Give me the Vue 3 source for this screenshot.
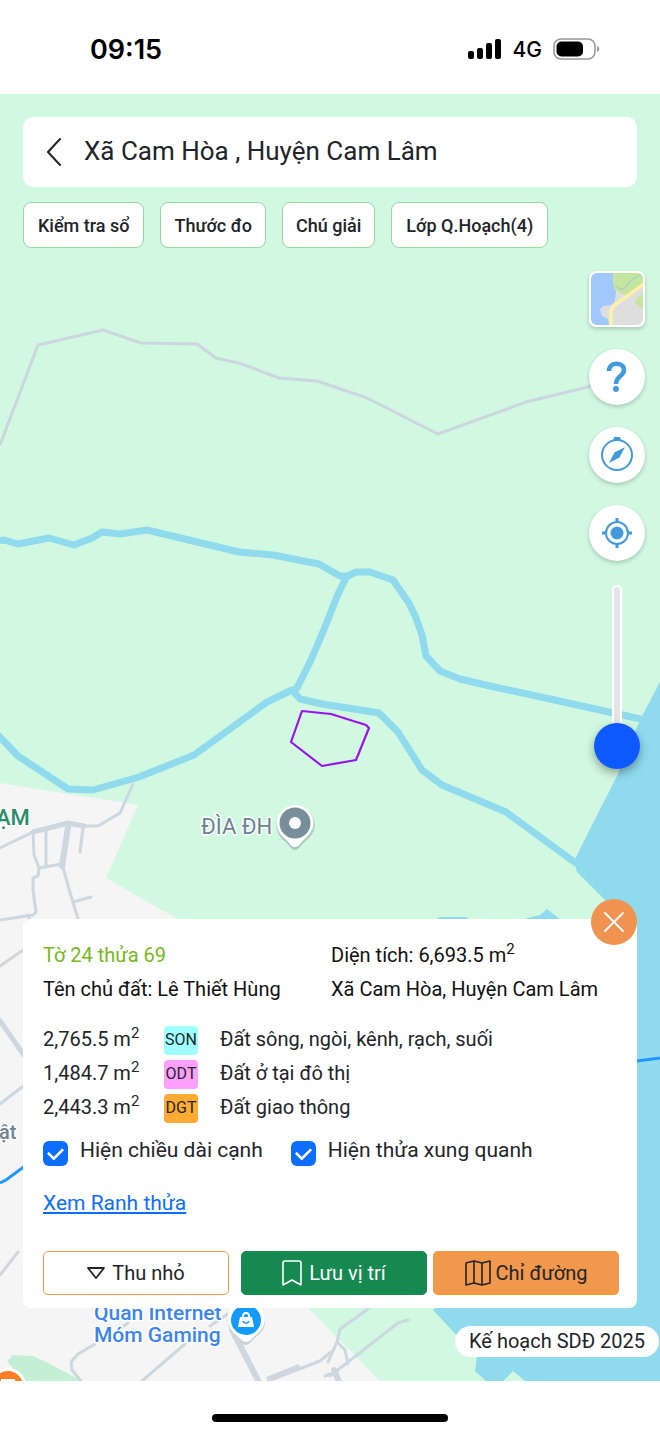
<script setup>
import { ref } from 'vue'

const layers = ['Kiểm tra sổ', 'Thước đo', 'Chú giải', 'Lớp Q.Hoạch(4)']
const landUses = [
  { area: '2,765.5', code: 'SON', tone: 'son', name: 'Đất sông, ngòi, kênh, rạch, suối' },
  { area: '1,484.7', code: 'ODT', tone: 'odt', name: 'Đất ở tại đô thị' },
  { area: '2,443.3', code: 'DGT', tone: 'dgt', name: 'Đất giao thông' }
]
const opacity = ref(0)
const showEdges = ref(true)
const showNeighbours = ref(true)
</script>

<template>
  <div class="screen">
    <header class="status">
      <span class="clock">09:15</span>
      <div class="signals">
        <svg width="34" height="22" viewBox="0 0 34 22" aria-hidden="true">
          <rect x="0" y="13" width="6" height="8" rx="2" />
          <rect x="9" y="10" width="6" height="11" rx="2" />
          <rect x="18" y="5" width="6" height="16" rx="2" />
          <rect x="27" y="1" width="6" height="20" rx="2" />
        </svg>
        <span class="network">4G</span>
        <svg width="47" height="22" viewBox="0 0 47 22" aria-hidden="true">
          <rect x="1" y="1" width="41" height="20" rx="7" fill="none" stroke="#999" stroke-width="1.6" />
          <rect x="3.500" y="3.500" width="26.500" height="15" rx="5" />
          <path d="M44 8c3 1 3 5 0 6z" fill="#999" />
        </svg>
      </div>
    </header>

    <main class="map">
      <svg class="canvas" viewBox="0 94 660 1287" preserveAspectRatio="xMidYMin slice" aria-hidden="true">
        <rect y="94" width="660" height="1287" fill="#d1f8e1" />
        <path fill="#f5f5f5" d="M0 783 138 805 106 878 160 909 180 920 308 1308 380 1381H0z" />
        <path fill="#c3f0d5" d="M7 1361 13 1355 33 1356 50 1364 82 1381H24z" />
        <path fill="#90daee" d="M660 682 641 718 637 727 617 776 592 825 574 861 577 872 606 901 625 930 460 1290 433 1310 477 1357 475 1371 486 1381H503L513 1371 525 1381H660z" />
        <path fill="#90daee" d="M433 921 440 917H466L471 921zM516 921 540 915 547 909 562 921z" />

        <g fill="none" stroke="#ccd7df" stroke-linejoin="round" stroke-linecap="round">
          <g stroke-width="3">
            <path d="M0 848 33 832M67 824 84 826H98L120 813 133 784" />
            <path d="M33 832 34 855 39 868 38 876 33 878V890L36 912 33 915 0 920M27 915 31 921" />
            <path d="M46 831V866M39 868 62 864M83 828 80 852M62 864 69 889 79 922M73 902 91 897" />
            <path d="M0 966 26 948M0 1104 26 1084M0 1275 18 1252" />
            <path d="M81 1381 72 1370 71 1362 78 1354 95 1344M128 1323 118 1330M142 1381 185 1344M210 1326 228 1314" />
            <path d="M268 1381 320 1361 331 1352M268 1378 298 1366M325 1376 330 1374" />
            <path d="M368 1309 340 1329 337 1342 328 1362M337 1342 345 1350 348 1364M330 1376 398 1323 408 1320" />
          </g>
          <path stroke-width="5" d="M33 832 68 823 84 826M0 1021 28 1061" />
          <path stroke-width="6" d="M68 827 62 866M232 1330 260 1384M334 1370 340 1384" />
        </g>
        <path fill="none" stroke="#ccd6df" stroke-width="3" stroke-linejoin="round" d="M0 445 38 345 103 330 141 343 197 344 216 358 242 364 279 378 317 381 367 398 438 434 526 402 600 384" />

        <g fill="none" stroke="#90daee" stroke-width="7" stroke-linejoin="round">
          <path d="M-4 541 4 540 18 544 49 538 74 545 92 538 102 532 120 534 147 530 239 552 273 555 319 564 340 576H348L356 572H370L393 580 409 603 416 618 422 635 426 656 440 671 460 679 490 686 550 699 645 720" />
          <path d="M347 576 338 594 325 627 311 660 297 688 292 691" />
          <path d="M-3 734 18 756 68 789 93 790 139 777 194 755 267 702 292 690 300 699 322 704 379 713 398 732 422 770 442 785 506 812 577 864" />
        </g>
        <path fill="none" stroke="#2196ff" stroke-width="3" d="M637 1061 660 1058M0 1183 6 1180 25 1166" />
        <path fill="none" stroke="#9a12ec" stroke-width="2.2" stroke-linejoin="round" d="M302 711 331 714 366 725 369 728 356 760 322 766 291 742z" />

        <g class="place">
          <text x="-4" y="825" font-size="22" fill="#2b8f66">ẠM</text>
          <text class="light" x="201" y="834" font-size="22" fill="#6c8391">ĐÌA ĐH</text>
          <text x="-1" y="1139" font-size="20" fill="#6c8391">ật</text>
          <g fill="#3d85ee" font-size="21">
            <text x="94" y="1320">Quán Internet</text>
            <text x="94" y="1342">Móm Gaming</text>
          </g>
        </g>
        <g>
          <path fill="#a9c9bd" d="M295 850c-4 0-6-6-12-10-14-14-3-34 12-34s29 19 12 34c-6 4-8 10-12 10z" />
          <path fill="#fff" d="M295 847c-4 0-6-5-11-9-15-13-4-33 11-33s27 19 11 33c-5 4-7 9-11 9z" />
          <circle cx="295" cy="823" r="15.500" fill="#788e9a" />
          <circle cx="295" cy="823" r="6" fill="#fff" />
        </g>
        <g>
          <path fill="#cbd1d4" d="M246 1345c-4 0-6-5-11-9-15-13-5-35 11-35s28 22 11 35c-5 4-7 9-11 9z" />
          <path fill="#fff" d="M246 1342c-4 0-6-4-11-8-15-13-5-34 11-34s27 21 11 34c-5 4-7 8-11 8z" />
          <circle cx="246" cy="1320" r="15" fill="#129bfb" />
          <path fill="#fff" d="M240 1317H252L254 1327H238z" />
          <path fill="none" stroke="#fff" stroke-width="1.800" d="M243 1318v-2c0-4 6-4 6 0v2" />
          <path fill="none" stroke="#129bfb" stroke-width="1.500" d="M243 1321c1 3 5 3 6 0" />
        </g>
        <circle cx="8" cy="1386" r="18" fill="#fff" />
        <circle cx="8" cy="1386" r="15" fill="#fd7e26" />
        <path fill="#fff" d="M1 1379h14v5H1z" />
      </svg>

      <div class="search">
        <button class="back" type="button" aria-label="Quay lại">
          <svg width="16" height="28" viewBox="0 0 16 28"><path d="M14 1 2 14 14 27" fill="none" stroke="#212529" stroke-width="2" stroke-linecap="round" stroke-linejoin="round" /></svg>
        </button>
        <h1>Xã Cam Hòa , Huyện Cam Lâm</h1>
      </div>

      <nav class="chips">
        <button v-for="layer in layers" :key="layer" type="button">{{ layer }}</button>
      </nav>

      <div class="tools">
        <button class="tile" type="button" aria-label="Lớp bản đồ">
          <svg viewBox="0 0 52 52" width="52" height="52">
            <rect width="52" height="52" fill="#dedede" />
            <path fill="#9fc8ff" d="M0 0H23L22 9 25 18 24 28 20 32 12 33 9 36 11 43 17 46 18 52H0z" />
            <path fill="#c3e59d" d="M22 0H52V11L36 24 27 18 23 16zM44 28 52 19V36L45 31z" />
            <path fill="none" stroke="#a8ccd0" stroke-width="1.200" d="M25 14C32 18 35 15 38 10S46 3 52 1" />
            <path fill="none" stroke="#fff0a8" stroke-width="3.500" d="M53 11 25 31Q19 35 20 44V52" />
          </svg>
        </button>
        <button class="round" type="button" aria-label="Trợ giúp">
          <svg viewBox="0 0 56 56" width="56" height="56">
            <path fill="none" stroke="#409adb" stroke-width="4.600" d="M20 22C20 12 35 13 35 21C35 27 27 27 27 35" />
            <circle cx="27" cy="40" r="2.900" fill="#409adb" />
          </svg>
        </button>
        <button class="round" type="button" aria-label="La bàn">
          <svg viewBox="0 0 56 56" width="56" height="56" fill="#409adb">
            <circle cx="28" cy="28" r="15" fill="none" stroke="#409adb" stroke-width="2" />
            <path d="M25 10H31L32 14H24zM36 20 30.500 30.500 20 36 25.500 25.500z" />
          </svg>
        </button>
        <button class="round" type="button" aria-label="Vị trí của tôi">
          <svg viewBox="0 0 56 56" width="56" height="56" fill="#409adb">
            <circle cx="28" cy="28" r="6.500" />
            <circle cx="28" cy="28" r="11" fill="none" stroke="#409adb" stroke-width="2" />
            <path d="M28 13v5M28 38v5M13 28h5M38 28h5" stroke="#409adb" stroke-width="3" />
          </svg>
        </button>
        <input v-model="opacity" class="opacity" type="range" min="0" max="100" aria-label="Độ mờ lớp quy hoạch">
      </div>

      <section class="card">
        <button class="close" type="button" aria-label="Đóng">
          <svg width="20" height="20" viewBox="0 0 20 20"><path d="M1 1 19 19M19 1 1 19" stroke="#fff" stroke-width="1.800" stroke-linecap="round" /></svg>
        </button>

        <div class="facts">
          <span class="parcel">Tờ 24 thửa 69</span>
          <span>Diện tích: 6,693.5 m<sup>2</sup></span>
          <span>Tên chủ đất: Lê Thiết Hùng</span>
          <span>Xã Cam Hòa, Huyện Cam Lâm</span>
        </div>

        <table class="uses">
          <tbody>
            <tr v-for="use in landUses" :key="use.code">
              <td class="area">{{ use.area }} m<sup>2</sup></td>
              <td class="code"><span :class="use.tone">{{ use.code }}</span></td>
              <td>{{ use.name }}</td>
            </tr>
          </tbody>
        </table>

        <div class="options">
          <label><input v-model="showEdges" type="checkbox"><span>Hiện chiều dài cạnh</span></label>
          <label><input v-model="showNeighbours" type="checkbox"><span>Hiện thửa xung quanh</span></label>
        </div>

        <a class="outline" href="#ranh-thua">Xem Ranh thửa</a>

        <div class="actions">
          <button class="shrink" type="button">
            <svg width="18" height="12" viewBox="0 0 18 12"><path d="M1 1H17L9.500 10.500Q9 11 8.500 10.500z" fill="none" stroke="#212529" stroke-width="1.800" stroke-linejoin="round" /></svg>
            Thu nhỏ
          </button>
          <button class="save" type="button">
            <svg width="20" height="26" viewBox="0 0 20 26"><path d="M1 25V3Q1 1 3 1H17Q19 1 19 3V25L10 20z" fill="none" stroke="#fff" stroke-width="1.600" stroke-linejoin="round" /></svg>
            Lưu vị trí
          </button>
          <button class="route" type="button">
            <svg width="26" height="26" viewBox="0 0 26 26"><path d="M1 3 9 1 17 3 25 1V23L17 25 9 23 1 25zM9 1V23M17 3V25" fill="none" stroke="#212529" stroke-width="1.600" stroke-linejoin="round" /></svg>
            Chỉ đường
          </button>
        </div>
      </section>

      <span class="plan">Kế hoạch SDĐ 2025</span>
    </main>

    <footer class="home"><span></span></footer>
  </div>
</template>

<style>
body {
  margin: 0;
  background: #fff;
}
</style>

<style scoped>
.screen {
  display: flex;
  flex-direction: column;
  min-height: 100vh;
  font-family: Roboto, "Liberation Sans", sans-serif;
  font-size: 20px;
  color: #212529;
}
.screen * {
  box-sizing: border-box;
}
button {
  font: inherit;
  color: inherit;
  margin: 0;
  padding: 0;
  border: 0;
  background: none;
}
sup {
  font-size: 15px;
  line-height: 0;
  vertical-align: 8px;
}

.status {
  display: flex;
  align-items: center;
  justify-content: space-between;
  height: 94px;
  padding: 4px 60px 0 90px;
  font-family: Inter, sans-serif;
  color: #000;
}
.clock {
  font-size: 27px;
  font-weight: 600;
}
.signals {
  display: flex;
  align-items: center;
  gap: 11px;
}
.network {
  font-size: 21px;
  font-weight: 500;
}

.map {
  position: relative;
  isolation: isolate;
  flex: 1;
  display: flex;
  flex-direction: column;
  overflow: hidden;
  padding: 23px 0 24px;
}
.canvas {
  position: absolute;
  inset: 0;
  z-index: -1;
  width: 100%;
  height: 100%;
}
.place {
  font-weight: 500;
  paint-order: stroke;
  stroke: #fff;
  stroke-width: 3px;
  stroke-linejoin: round;
}
.place .light {
  font-weight: 400;
}

.search {
  display: flex;
  align-items: center;
  gap: 22px;
  height: 70px;
  margin: 0 23px;
  padding: 0 23px;
  border-radius: 10px;
  background: #fff;
}
.back {
  display: flex;
}
h1 {
  margin: 0;
  padding-bottom: 2px;
  font-size: 26px;
  font-weight: 400;
}

.chips {
  display: flex;
  gap: 16px;
  margin: 15px 23px 23px;
}
.chips button {
  height: 46px;
  padding: 0 13px;
  border: 1px solid #98d89c;
  border-radius: 8px;
  background: #fff;
  font-size: 18px;
  font-weight: 500;
}
.chips button:first-child,
.chips button:last-child {
  padding: 0 14px;
}

.tools {
  flex: 1;
  display: flex;
  flex-direction: column;
  align-items: center;
  align-self: flex-end;
  gap: 22px;
  margin-right: 15px;
}
.tile,
.round {
  width: 56px;
  height: 56px;
  overflow: hidden;
  background: #fff;
  box-shadow: 0 2px 4px rgba(0, 0, 0, 0.2);
}
.tile {
  border: 2px solid #fff;
  border-radius: 7px;
}
.round {
  border-radius: 50%;
}
.tile svg,
.round svg {
  display: block;
}
.tile svg {
  border-radius: 6px;
}
.opacity {
  appearance: none;
  writing-mode: vertical-lr;
  direction: rtl;
  width: 46px;
  height: 184px;
  margin: 2px 0 0;
  background: transparent;
}
.opacity::-webkit-slider-runnable-track {
  width: 10px;
  height: 100%;
  border: 2px solid #fff;
  border-radius: 5px;
  background: #e4e4e4;
}
.opacity::-webkit-slider-thumb {
  appearance: none;
  width: 46px;
  height: 46px;
  margin: 0 0 -2px -20px;
  border-radius: 50%;
  background: #0d59fd;
  box-shadow: 0 4px 10px rgba(0, 0, 0, 0.35);
}

.card {
  position: relative;
  margin: 0 23px;
  padding: 19px 18px 13px 20px;
  border-radius: 8px;
  background: #fff;
}
.close {
  position: absolute;
  top: -20px;
  right: 0;
  display: flex;
  align-items: center;
  justify-content: center;
  width: 46px;
  height: 46px;
  border-radius: 50%;
  background: #f09351;
}
.facts {
  display: grid;
  grid-template-columns: 1fr 1fr;
  line-height: 34px;
  color: #111;
}
.facts .parcel {
  color: #77b71b;
}
.uses {
  margin-top: 16px;
  border-collapse: collapse;
  line-height: 34px;
}
.uses td {
  height: 34px;
  padding: 0;
}
.uses .area {
  width: 121px;
}
.uses .code {
  width: 56px;
}
.code span {
  display: block;
  width: 34px;
  height: 29px;
  margin-top: 2px;
  border-radius: 4px;
  font-size: 16px;
  line-height: 27px;
  text-align: center;
}
.son {
  background: #a0ffff;
}
.odt {
  background: #ffa0ff;
}
.dgt {
  background: #ffaa32;
}

.options {
  display: flex;
  gap: 28px;
  margin-top: 9px;
  font-size: 21px;
  line-height: 34px;
}
.options label {
  display: flex;
  gap: 12px;
}
.options input {
  appearance: none;
  display: grid;
  place-items: center;
  width: 25px;
  height: 25px;
  margin: 8px 0 0;
  border-radius: 6px;
  background: #0d6efd;
}
.options input:checked::before {
  content: "";
  width: 12px;
  height: 7px;
  margin-bottom: 3px;
  border: solid #fff;
  border-width: 0 0 3px 3px;
  border-radius: 1px;
  transform: rotate(-45deg);
}
.outline {
  display: block;
  width: fit-content;
  margin-top: 20px;
  font-size: 21px;
  line-height: 32px;
  color: #0d6efd;
}

.actions {
  display: flex;
  gap: 6px;
  margin-top: 32px;
}
.actions button {
  flex: 1;
  display: flex;
  align-items: center;
  justify-content: center;
  gap: 7px;
  height: 44px;
  border: 1px solid transparent;
  border-radius: 5px;
}
.actions .shrink {
  margin-right: 6px;
  border-color: #f79a4d;
}
.actions .save {
  border-color: #15894f;
  background: #15894f;
  color: #fff;
}
.actions .route {
  gap: 5px;
  border-color: #f2984c #f2984c #ff9c12;
  background: #f2984c;
}

.plan {
  align-self: flex-end;
  margin: 18px 1px 0 0;
  padding: 0 14px;
  border-radius: 16px;
  background: #fff;
  line-height: 31px;
}

.home {
  display: flex;
  justify-content: center;
  align-items: center;
  height: 53px;
  padding-top: 20px;
}
.home span {
  width: 236px;
  height: 8px;
  border-radius: 4px;
  background: #000;
}
</style>
